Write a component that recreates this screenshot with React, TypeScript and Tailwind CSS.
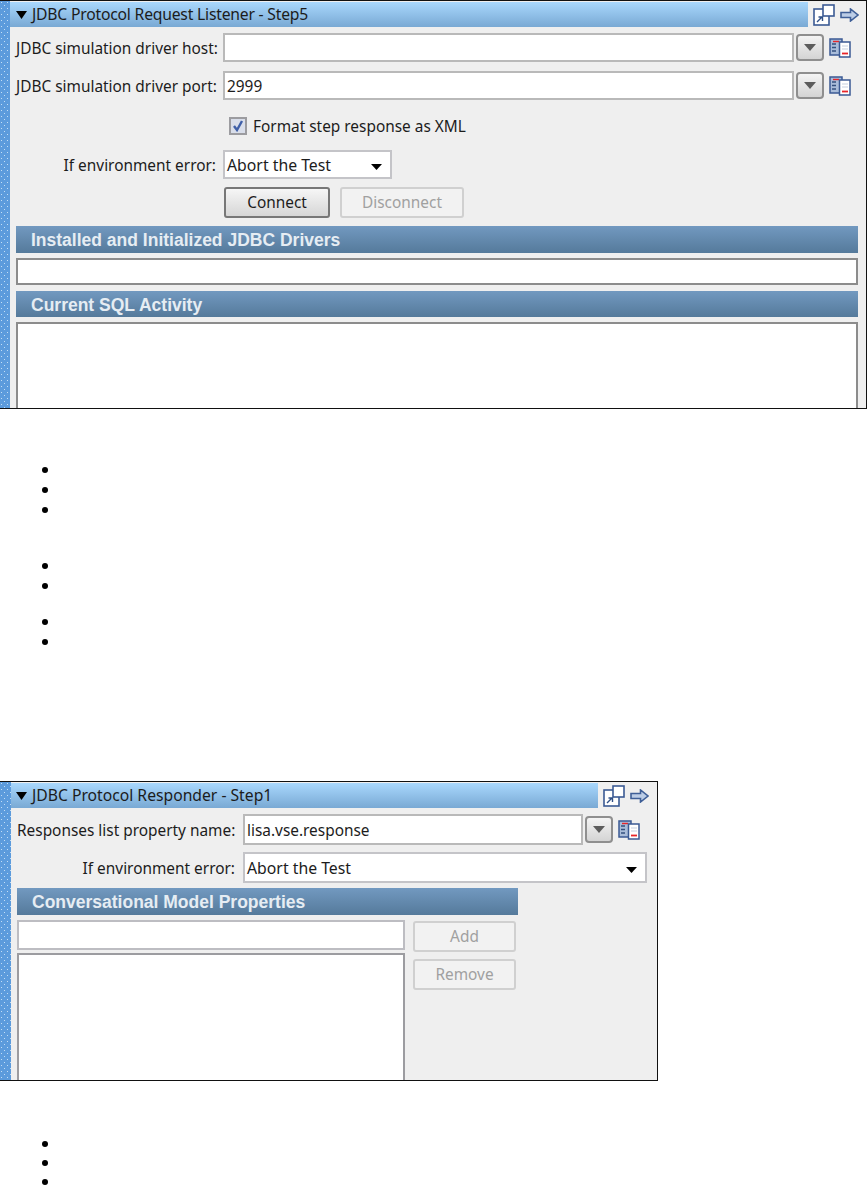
import React from "react";

const uiFont = "font-['Noto_Sans',sans-serif] text-[15.4px] text-[#1c1c1c]";
const fieldFont = `${uiFont} pt-[2px]`;

const PopIcons = () => (
  <div className="flex items-center gap-[5px]">
    <svg width="22" height="22" viewBox="0 0 22 22">
      <rect x="1" y="5" width="15" height="16" fill="#fff" stroke="#3b5a94" strokeWidth="1.6" />
      <rect x="10" y="1" width="11" height="11" fill="#fff" stroke="#3b5a94" strokeWidth="1.6" />
      <path d="M4 18 L9 13 M5.5 13 H9.5 V17" fill="none" stroke="#2f4f86" strokeWidth="1.4" />
    </svg>
    <svg width="19" height="14" viewBox="0 0 19 14">
      <path d="M1 4.5 H10.5 V1 L18 7 L10.5 13 V9.5 H1 Z" fill="#bccde6" stroke="#3f5f97" strokeWidth="1.6" />
    </svg>
  </div>
);

const PanelHeader = ({ title, className }: { title: string; className: string }) => (
  <div className="flex items-center mt-[1px]">
    <div className={`${className} h-[25px] flex items-center gap-[5px] bg-gradient-to-b from-[#a9d8fd] to-[#79a9d4]`}>
      <svg width="11" height="8" viewBox="0 0 11 8">
        <path d="M0 0 H11 L5.5 8 Z" fill="#000" />
      </svg>
      <span className={`${uiFont} !text-[15.7px]`}>{title}</span>
    </div>
    <div className="ml-[5px]">
      <PopIcons />
    </div>
  </div>
);

const DropButton = () => (
  <div className="ml-[2px] w-[28px] h-[27px] rounded-[4px] border-2 border-[#8f8f8f] bg-gradient-to-b from-[#f4f4f4] to-[#d4d4d4] flex items-center justify-center">
    <svg width="12" height="7" viewBox="0 0 12 7">
      <path d="M0 0 H12 L6 7 Z" fill="#5c5c5c" />
    </svg>
  </div>
);

const ClipIcon = () => (
  <svg className="ml-[5px]" width="22" height="20" viewBox="0 0 22 20">
    <rect x="1" y="1" width="12" height="16" fill="#a9bcd9" stroke="#3b5a94" strokeWidth="1.5" />
    <path d="M3 6 H7 M3 9.5 H7 M3 13 H7" stroke="#34507f" strokeWidth="1.3" />
    <path d="M4 3.5 H10" stroke="#e8262a" strokeWidth="1.4" />
    <rect x="10.5" y="4" width="10.5" height="15" fill="#fff" stroke="#3b5a94" strokeWidth="1.5" />
    <path d="M13 8 H19 M13 11 H19" stroke="#c6cfdf" strokeWidth="1.2" />
    <path d="M13 15.5 H19" stroke="#e8262a" strokeWidth="1.8" />
  </svg>
);

const TextBox = ({ value, width, height }: { value?: string; width: string; height: string }) => (
  <div className={`${width} ${height} ${fieldFont} bg-white border-2 border-[#b9b9b9] flex items-center pl-[2px]`}>
    {value}
  </div>
);

const SelectBox = ({ width, height }: { width: string; height: string }) => (
  <div
    className={`${width} ${height} ${fieldFont} !text-[15.8px] bg-white border-2 border-[#c4c4c8] flex items-center justify-between pl-[2px] pr-[8px]`}
  >
    <span>Abort the Test</span>
    <svg className="mt-[2px]" width="11" height="6" viewBox="0 0 11 6">
      <path d="M0 0 H11 L5.5 6 Z" fill="#000" />
    </svg>
  </div>
);

const SectionBar = ({ title, width, height }: { title: string; width: string; height: string }) => (
  <div
    className={`${width} ${height} bg-gradient-to-b from-[#7299c0] to-[#557a9b] flex items-center pl-[15px] pt-[2px] font-['Liberation_Sans',sans-serif] font-bold text-[17.5px] text-[#e6edf3]`}
  >
    {title}
  </div>
);

const DisabledButton = ({ label, width, height }: { label: string; width: string; height: string }) => (
  <div
    className={`${width} ${height} ${uiFont} rounded-[3px] border-2 border-[#d0d0d0] bg-[#f2f2f2] flex items-center justify-center !text-[#a0a0a0]`}
  >
    {label}
  </div>
);

const Panel = ({ className, strip, children }: { className: string; strip: string; children: React.ReactNode }) => (
  <div className={`${className} flex border-t border-r border-b border-[#111] bg-[#efefef] overflow-hidden`}>
    <div
      className={`${strip} shrink-0 bg-[#5c9bdc] bg-[radial-gradient(circle_at_1.5px_1.5px,#c4def5_0.8px,transparent_1px),radial-gradient(circle_at_4.5px_4.5px,#c4def5_0.8px,transparent_1px)] bg-[length:6px_6px]`}
    />
    <div className="flex-1 min-w-0">{children}</div>
  </div>
);

const Bullets = ({ count, className, rowHeight }: { count: number; className: string; rowHeight: string }) => (
  <ul className={`${className} list-disc pl-[60px]`}>
    {Array.from({ length: count }).map((_, i) => (
      <li key={i} className={`${rowHeight} text-[19px] font-['Liberation_Sans',sans-serif]`}></li>
    ))}
  </ul>
);

const App = () => {
  return (
    <div className="w-[868px] h-[1185px] bg-white overflow-hidden">
      {/* first panel */}
      <Panel className="w-[867px] h-[409px]" strip="w-[10px]">
        <PanelHeader title="JDBC Protocol Request Listener - Step5" className="w-[798px] pl-[6px] tracking-[-0.2px]" />
        <div className="pl-[6px]">
          <div className="flex items-center mt-[6px] h-[29px]">
            <div className={`${fieldFont} w-[200px] text-right whitespace-nowrap`}>JDBC simulation driver host:</div>
            <div className="ml-[7px]">
              <TextBox width="w-[571px]" height="h-[29px]" />
            </div>
            <DropButton />
            <ClipIcon />
          </div>
          <div className="flex items-center mt-[9px] h-[29px]">
            <div className={`${fieldFont} w-[200px] text-right whitespace-nowrap`}>JDBC simulation driver port:</div>
            <div className="ml-[7px]">
              <TextBox value="2999" width="w-[571px]" height="h-[29px]" />
            </div>
            <DropButton />
            <ClipIcon />
          </div>
          <div className="flex items-center mt-[16px] ml-[213px] h-[19px] gap-[6px]">
            <div className="w-[18px] h-[18px] border-2 border-[#9c9ca0] bg-[#d9deea] flex items-center justify-center">
              <svg width="12" height="12" viewBox="0 0 12 12">
                <path d="M2 6 L5 10 L10 1" fill="none" stroke="#3f5fa8" strokeWidth="2.4" />
              </svg>
            </div>
            <span className={fieldFont}>Format step response as XML</span>
          </div>
          <div className="flex items-center mt-[15px] h-[29px]">
            <div className={`${fieldFont} w-[200px] text-right`}>If environment error:</div>
            <div className="ml-[7px]">
              <SelectBox width="w-[169px]" height="h-[29px]" />
            </div>
          </div>
          <div className="flex mt-[8px] ml-[208px] gap-[10px]">
            <div
              className={`${uiFont} w-[106px] h-[31px] rounded-[3px] border-2 border-[#777] bg-gradient-to-b from-[#f6f6f6] to-[#d6d6d6] flex items-center justify-center`}
            >
              Connect
            </div>
            <DisabledButton label="Disconnect" width="w-[124px]" height="h-[31px]" />
          </div>
          <div className="mt-[8px]">
            <SectionBar title="Installed and Initialized JDBC Drivers" width="w-[842px]" height="h-[27px]" />
          </div>
          <div className="mt-[5px] w-[842px] h-[27px] bg-white border-2 border-[#8c8c8c]" />
          <div className="mt-[6px]">
            <SectionBar title="Current SQL Activity" width="w-[842px]" height="h-[26px]" />
          </div>
          <div className="mt-[5px] w-[842px] h-[100px] bg-white border-2 border-[#8c8c8c]" />
        </div>
      </Panel>

      <Bullets count={3} rowHeight="h-[20px]" className="mt-[46px]" />
      <Bullets count={2} rowHeight="h-[20px]" className="mt-[36px]" />
      <Bullets count={2} rowHeight="h-[20px]" className="mt-[16px]" />

      {/* second panel */}
      <Panel className="mt-[134px] w-[658px] h-[300px]" strip="w-[11px]">
        <PanelHeader title="JDBC Protocol Responder - Step1" className="w-[587px] pl-[5px]" />
        <div className="pl-[6px]">
          <div className="flex items-center mt-[6px] h-[31px]">
            <div className={`${fieldFont} w-[218px] text-right whitespace-nowrap`}>Responses list property name:</div>
            <div className="ml-[8px]">
              <TextBox value="lisa.vse.response" width="w-[340px]" height="h-[31px]" />
            </div>
            <DropButton />
            <ClipIcon />
          </div>
          <div className="flex items-center mt-[7px] h-[31px]">
            <div className={`${fieldFont} w-[218px] text-right`}>If environment error:</div>
            <div className="ml-[8px]">
              <SelectBox width="w-[404px]" height="h-[31px]" />
            </div>
          </div>
          <div className="mt-[5px]">
            <SectionBar title="Conversational Model Properties" width="w-[501px]" height="h-[27px]" />
          </div>
          <div className="flex mt-[5px]">
            <div className="w-[388px]">
              <div className="w-[388px] h-[30px] bg-white border-2 border-[#bdbdc2]" />
              <div className="mt-[3px] w-[388px] h-[140px] bg-white border-2 border-[#9c9ca0]" />
            </div>
            <div className="ml-[8px] mt-[1px] flex flex-col gap-[7px]">
              <DisabledButton label="Add" width="w-[103px]" height="h-[31px]" />
              <DisabledButton label="Remove" width="w-[103px]" height="h-[31px]" />
            </div>
          </div>
        </div>
      </Panel>

      <Bullets count={3} rowHeight="h-[19px]" className="mt-[48px]" />
    </div>
  );
};

export default App;
